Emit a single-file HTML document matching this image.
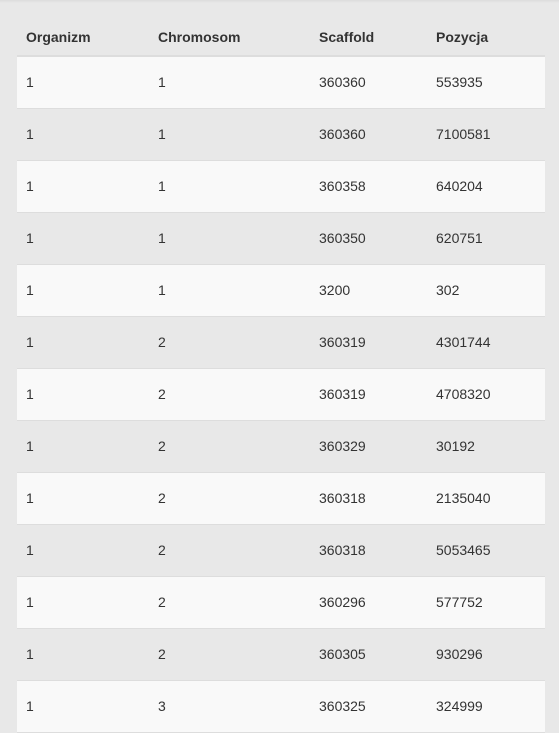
<!DOCTYPE html>
<html><head><style>
html,body{margin:0;padding:0;background:#e8e8e8;width:559px;height:729px;overflow:hidden;font-family:"Liberation Sans",Arial,sans-serif;font-size:14px;color:#333}
.top{position:absolute;left:0;top:0;width:559px;height:3px;background:linear-gradient(#dcdcdc,#e8e8e8)}
table{position:absolute;left:17px;top:0;width:528px;border-collapse:collapse;table-layout:fixed}
th{height:56px;text-align:left;font-weight:bold;padding:0 0 0 9px;border-bottom:2px solid #dddddd;vertical-align:middle;padding-top:18px;box-sizing:border-box;line-height:16px}
td{height:52px;padding:0 0 0 9px;border-bottom:1px solid #dddddd;box-sizing:border-box;vertical-align:middle;line-height:16px}
tbody tr:nth-child(odd){background:#f9f9f9}
</style></head><body>
<div class="top"></div>
<table>
<colgroup><col style="width:132px"><col style="width:161px"><col style="width:117px"><col style="width:118px"></colgroup>
<thead><tr><th>Organizm</th><th>Chromosom</th><th>Scaffold</th><th>Pozycja</th></tr></thead>
<tbody>
<tr><td>1</td><td>1</td><td>360360</td><td>553935</td></tr>
<tr><td>1</td><td>1</td><td>360360</td><td>7100581</td></tr>
<tr><td>1</td><td>1</td><td>360358</td><td>640204</td></tr>
<tr><td>1</td><td>1</td><td>360350</td><td>620751</td></tr>
<tr><td>1</td><td>1</td><td>3200</td><td>302</td></tr>
<tr><td>1</td><td>2</td><td>360319</td><td>4301744</td></tr>
<tr><td>1</td><td>2</td><td>360319</td><td>4708320</td></tr>
<tr><td>1</td><td>2</td><td>360329</td><td>30192</td></tr>
<tr><td>1</td><td>2</td><td>360318</td><td>2135040</td></tr>
<tr><td>1</td><td>2</td><td>360318</td><td>5053465</td></tr>
<tr><td>1</td><td>2</td><td>360296</td><td>577752</td></tr>
<tr><td>1</td><td>2</td><td>360305</td><td>930296</td></tr>
<tr><td>1</td><td>3</td><td>360325</td><td>324999</td></tr>
</tbody>
</table>
</body></html>
